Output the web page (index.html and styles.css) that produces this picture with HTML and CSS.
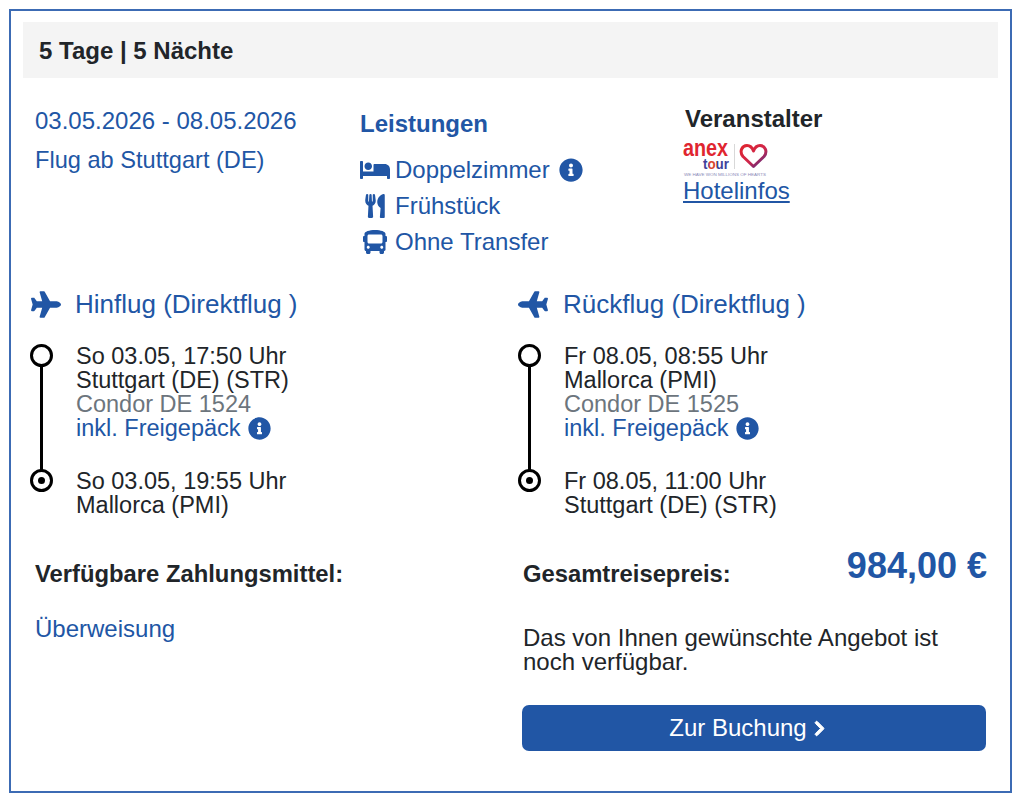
FILE: index.html
```html
<!DOCTYPE html>
<html lang="de">
<head>
    <meta charset="UTF-8">
    <meta name="viewport" content="width=device-width, initial-scale=1.0">
    <title>Angebot</title>
    <link rel="stylesheet" href="styles.css">
</head>
<body>
    <svg class="icon-defs" aria-hidden="true">
        <symbol id="i-plane" viewBox="0 0 576 512"><path d="M480 192H365.71L260.61 8.06A16.014 16.014 0 0 0 246.71 0h-65.5c-10.63 0-18.3 10.17-15.38 20.39L214.86 192H112l-43.2-57.6c-3.02-4.03-7.77-6.4-12.8-6.4H16.01C5.6 128-2.04 137.78.49 147.88L32 256 .49 364.12C-2.04 374.22 5.6 384 16.01 384H56c5.04 0 9.78-2.37 12.8-6.4L112 320h102.86l-49.03 171.6c-2.92 10.22 4.75 20.4 15.38 20.4h65.5c5.74 0 11.04-3.08 13.89-8.06L365.71 320H480c35.35 0 96-28.65 96-64s-60.65-64-96-64z"/></symbol>
        <symbol id="i-info" viewBox="0 0 512 512"><path d="M256 8C119.043 8 8 119.083 8 256c0 136.997 111.043 248 248 248s248-111.003 248-248C504 119.083 392.957 8 256 8zm0 110c23.196 0 42 18.804 42 42s-18.804 42-42 42-42-18.804-42-42 18.804-42 42-42zm56 254c0 6.627-5.373 12-12 12h-88c-6.627 0-12-5.373-12-12v-24c0-6.627 5.373-12 12-12h12v-64h-12c-6.627 0-12-5.373-12-12v-24c0-6.627 5.373-12 12-12h64c6.627 0 12 5.373 12 12v100h12c6.627 0 12 5.373 12 12v24z"/></symbol>
        <symbol id="i-bed" viewBox="0 0 640 512"><path d="M176 256c44.11 0 80-35.89 80-80s-35.89-80-80-80-80 35.89-80 80 35.89 80 80 80zm352-128H304c-8.84 0-16 7.16-16 16v144H64V80c0-8.84-7.16-16-16-16H16C7.16 64 0 71.16 0 80v352c0 8.84 7.16 16 16 16h32c8.84 0 16-7.16 16-16v-48h512v48c0 8.84 7.16 16 16 16h32c8.84 0 16-7.16 16-16V240c0-61.86-50.14-112-112-112z"/></symbol>
        <symbol id="i-food" viewBox="0 0 416 512"><path d="M207.9 15.2c.8 4.7 16.1 94.5 16.1 128.8 0 52.3-27.8 89.6-68.9 104.6L168 486.7c.7 13.7-10.2 25.3-24 25.3H80c-13.7 0-24.7-11.5-24-25.3l12.9-238.1C27.7 233.6 0 196.2 0 144 0 109.6 15.3 19.9 16.1 15.2 19.3-5.1 61.4-5.4 64 16.3v141.2c1.3 3.4 15.1 3.2 16 0 1.4-25.3 7.9-139.2 8-141.8 3.3-20.8 44.7-20.8 47.9 0 .2 2.7 6.6 116.5 8 141.8.9 3.2 14.8 3.4 16 0V16.3c2.6-21.6 44.8-21.4 48-1.1zm119.2 285.7l-15 185.1c-1.2 14 9.9 26 23.9 26h56c13.3 0 24-10.7 24-24V24c0-13.2-10.7-24-24-24-82.5 0-221.4 178.5-64.9 300.9z"/></symbol>
        <symbol id="i-bus" viewBox="0 0 512 512"><path d="M488 128h-8V80c0-44.8-99.2-80-224-80S32 35.2 32 80v48h-8c-13.25 0-24 10.74-24 24v80c0 13.25 10.75 24 24 24h8v160c0 17.67 14.33 32 32 32v32c0 17.67 14.33 32 32 32h32c17.67 0 32-14.33 32-32v-32h192v32c0 17.67 14.33 32 32 32h32c17.67 0 32-14.33 32-32v-32h6.4c16 0 25.6-12.8 25.6-25.6V256h8c13.25 0 24-10.75 24-24v-80c0-13.26-10.75-24-24-24zM112 400c-17.67 0-32-14.33-32-32s14.33-32 32-32 32 14.33 32 32-14.33 32-32 32zm16-112c-17.67 0-32-14.33-32-32V128c0-17.67 14.33-32 32-32h256c17.67 0 32 14.33 32 32v128c0 17.67-14.33 32-32 32H128zm272 112c-17.67 0-32-14.33-32-32s14.33-32 32-32 32 14.33 32 32-14.33 32-32 32z"/></symbol>
        <symbol id="i-chevron" viewBox="0 0 320 512"><path d="M285.476 272.971L91.132 467.314c-9.373 9.373-24.569 9.373-33.941 0l-22.667-22.667c-9.357-9.357-9.375-24.522-.04-33.901L188.505 256 34.484 101.255c-9.335-9.379-9.317-24.544.04-33.901l22.667-22.667c9.373-9.373 24.569-9.373 33.941 0L285.475 239.03c9.373 9.372 9.373 24.568.001 33.941z"/></symbol>
    </svg>

    <div class="card">
        <div class="card-head">5 Tage | 5 Nächte</div>

        <div class="top-row">
            <div class="trip-info">
                <div>03.05.2026 - 08.05.2026</div>
                <div class="trip-from">Flug ab Stuttgart (DE)</div>
            </div>
            <div class="services">
                <div class="services-title">Leistungen</div>
                <ul class="service-list">
                    <li><svg class="service-icon"><use href="#i-bed"/></svg>Doppelzimmer<svg class="info-icon"><use href="#i-info"/></svg></li>
                    <li><svg class="service-icon"><use href="#i-food"/></svg>Frühstück</li>
                    <li><svg class="service-icon"><use href="#i-bus"/></svg>Ohne Transfer</li>
                </ul>
            </div>
            <div class="operator">
                <div class="operator-title">Veranstalter</div>
                <svg class="operator-logo" viewBox="0 -10 86 45" width="86" height="45">
                    <defs>
                        <linearGradient id="heart-grad" x1="0" y1="0" x2="1" y2="1">
                            <stop offset="0" stop-color="#e0252f"/>
                            <stop offset="0.55" stop-color="#d0264a"/>
                            <stop offset="1" stop-color="#3d2f8f"/>
                        </linearGradient>
                        <linearGradient id="tour-grad" x1="0" y1="0" x2="1" y2="0">
                            <stop offset="0.24" stop-color="#3d3f9a"/>
                            <stop offset="0.24" stop-color="#d8452f"/>
                            <stop offset="0.54" stop-color="#d8452f"/>
                            <stop offset="0.54" stop-color="#3d3f9a"/>
                        </linearGradient>
                    </defs>
                    <text x="0" y="13" class="logo-anex" textLength="45" lengthAdjust="spacingAndGlyphs">anex</text>
                    <text x="20" y="25.500" class="logo-tour" textLength="26" lengthAdjust="spacingAndGlyphs">tour</text>
                    <line x1="51.500" y1="1" x2="51.500" y2="26" stroke="#d8d8d8" stroke-width="1"/>
                    <path d="M70.500 23.500 L60 13.500 C56 8.500 59 2.500 64 2.500 C67 2.500 69.200 4.500 70.500 8 C71.800 4.500 74 2.500 77 2.500 C82 2.500 85 8.500 81 13.500 Z" fill="none" stroke="url(#heart-grad)" stroke-width="3" stroke-linejoin="round"/>
                    <text x="1" y="32.500" class="logo-claim" textLength="82" lengthAdjust="spacingAndGlyphs">WE HAVE WON MILLIONS OF HEARTS</text>
                </svg>
                <a class="hotel-link" href="#">Hotelinfos</a>
            </div>
        </div>

        <div class="flights">
            <div class="flight">
                <div class="flight-title"><svg class="plane-icon plane-out"><use href="#i-plane"/></svg>Hinflug (Direktflug )</div>
                <div class="route">
                    <div class="stop-marker"></div>
                    <div class="stop stop-first">
                        <div>So 03.05, 17:50 Uhr</div>
                        <div>Stuttgart (DE) (STR)</div>
                        <div class="carrier">Condor DE 1524</div>
                        <div class="baggage">inkl. Freigepäck<svg class="info-icon"><use href="#i-info"/></svg></div>
                    </div>
                    <div class="stop-marker stop-marker-end"></div>
                    <div class="stop">
                        <div>So 03.05, 19:55 Uhr</div>
                        <div>Mallorca (PMI)</div>
                    </div>
                </div>
            </div>
            <div class="flight">
                <div class="flight-title"><svg class="plane-icon plane-back"><use href="#i-plane"/></svg>Rückflug (Direktflug )</div>
                <div class="route">
                    <div class="stop-marker"></div>
                    <div class="stop stop-first">
                        <div>Fr 08.05, 08:55 Uhr</div>
                        <div>Mallorca (PMI)</div>
                        <div class="carrier">Condor DE 1525</div>
                        <div class="baggage">inkl. Freigepäck<svg class="info-icon"><use href="#i-info"/></svg></div>
                    </div>
                    <div class="stop-marker stop-marker-end"></div>
                    <div class="stop">
                        <div>Fr 08.05, 11:00 Uhr</div>
                        <div>Stuttgart (DE) (STR)</div>
                    </div>
                </div>
            </div>
        </div>

        <div class="bottom-row">
            <div class="payment">
                <div class="payment-title">Verfügbare Zahlungsmittel:</div>
                <div class="payment-method">Überweisung</div>
            </div>
            <div class="summary">
                <div class="price-row">
                    <span class="price-label">Gesamtreisepreis:</span>
                    <span class="price">984,00 €</span>
                </div>
                <p class="availability">Das von Ihnen gewünschte Angebot ist noch verfügbar.</p>
                <button class="book-button">Zur Buchung<svg class="chevron-icon"><use href="#i-chevron"/></svg></button>
            </div>
        </div>
    </div>
</body>
</html>
```

FILE: styles.css
```css
* {
    box-sizing: border-box;
}

body {
    font-family: "Liberation Sans", Arial, sans-serif;
    margin: 0;
    padding: 9px 12px 6px 9px;
    background-color: #fff;
    color: #212529;
    font-size: 23.5px;
}

.icon-defs {
    display: none;
}

svg {
    fill: currentColor;
}

.card {
    height: 784px;
    border: 2px solid #3c6bb4;
    padding: 11px 12px 0 12px;
}

.card-head {
    height: 56px;
    background-color: #f4f4f4;
    padding-left: 16px;
    font-size: 24px;
    font-weight: bold;
    line-height: 58px;
}

/* top row */
.top-row {
    display: grid;
    grid-template-columns: 325px 323px 1fr;
    padding-left: 12px;
    height: 208px;
    color: #2156a5;
}

.trip-info {
    font-size: 24px;
    line-height: 28px;
    padding-top: 29px;
}

.trip-from {
    margin-top: 11px;
    font-size: 23.6px;
}

.services-title {
    font-size: 24px;
    font-weight: bold;
    line-height: 28px;
    padding-top: 32px;
}

.service-list {
    list-style-type: none;
    margin: 14px 0 0 0;
    padding: 0;
}

.service-list li {
    display: flex;
    align-items: center;
    height: 36px;
    font-size: 24px;
}

.service-icon {
    width: 30px;
    height: 24px;
    margin-right: 5px;
    flex: none;
}

.info-icon {
    width: 24px;
    height: 24px;
    margin-left: 9px;
    flex: none;
}

.operator {
    color: #212529;
}

.operator-title {
    font-size: 24px;
    font-weight: bold;
    line-height: 28px;
    padding: 27px 0 0 2px;
}

.operator-logo {
    display: block;
}

.logo-anex {
    font-family: "Liberation Sans", sans-serif;
    font-size: 23px;
    font-weight: bold;
    fill: #e0252f;
}

.logo-tour {
    font-family: "Liberation Sans", sans-serif;
    font-size: 15px;
    font-weight: bold;
    fill: url(#tour-grad);
}

.logo-claim {
    font-family: "Liberation Sans", sans-serif;
    font-size: 3.6px;
    fill: #8a8ab8;
}

.hotel-link {
    display: block;
    color: #2156a5;
    font-size: 24px;
    line-height: 26px;
}

/* flights */
.flights {
    display: grid;
    grid-template-columns: 488px 1fr;
    padding-left: 7px;
}

.flight-title {
    display: flex;
    align-items: center;
    height: 36px;
    color: #2156a5;
    font-size: 26px;
}

.plane-icon {
    width: 30px;
    height: 27px;
    margin-right: 15px;
    flex: none;
}

.plane-out {
    margin-left: 1px;
    margin-right: 14px;
}

.plane-back {
    transform: scaleX(-1);
}

.route {
    display: grid;
    grid-template-columns: 46px 1fr;
    margin-top: 22px;
    line-height: 24px;
}

.stop-first {
    height: 125px;
}

.stop-marker {
    position: relative;
    width: 23px;
    height: 23px;
    border: 3px solid #000;
    border-radius: 50%;
    background-color: #fff;
}

/* connecting line from the first stop down to the last */
.stop-marker::after {
    content: "";
    position: absolute;
    left: 7px;
    top: 20px;
    width: 3px;
    height: 105px;
    background-color: #000;
}

.stop-marker-end::after {
    left: 5px;
    top: 5px;
    width: 7px;
    height: 7px;
    border-radius: 50%;
}

.carrier {
    color: #6c757d;
}

.baggage {
    display: flex;
    align-items: center;
    color: #2156a5;
}

.baggage .info-icon {
    width: 23px;
    height: 23px;
    margin-left: 7px;
}

/* bottom */
.bottom-row {
    display: grid;
    grid-template-columns: 488px 1fr;
    padding-left: 12px;
    margin-top: 27px;
}

.payment-title {
    font-size: 23.8px;
    font-weight: bold;
    line-height: 28px;
    padding-top: 16px;
}

.payment-method {
    color: #2156a5;
    font-size: 24px;
    line-height: 28px;
    margin-top: 27px;
}

.summary {
    padding-right: 12px;
}

.price-row {
    display: flex;
    justify-content: space-between;
    align-items: flex-start;
    height: 46px;
}

.price-label {
    font-size: 23.8px;
    font-weight: bold;
    line-height: 28px;
    margin-top: 16px;
}

.price {
    color: #2156a5;
    font-size: 36px;
    font-weight: bold;
    line-height: 40px;
    margin: 2px -1px 0 0;
}

.availability {
    margin: 36px 0 0 0;
    font-size: 24px;
    line-height: 24px;
}

.book-button {
    display: flex;
    align-items: center;
    justify-content: center;
    width: calc(100% + 1px);
    height: 46px;
    margin: 31px 0 0 -1px;
    padding: 0 14px 0 0;
    background-color: #2156a5;
    border: none;
    border-radius: 7px;
    color: #fff;
    font-family: inherit;
    font-size: 24px;
    cursor: pointer;
}

.chevron-icon {
    width: 11px;
    height: 17px;
    margin-left: 7px;
    stroke: currentColor;
    stroke-width: 30px;
}
```
